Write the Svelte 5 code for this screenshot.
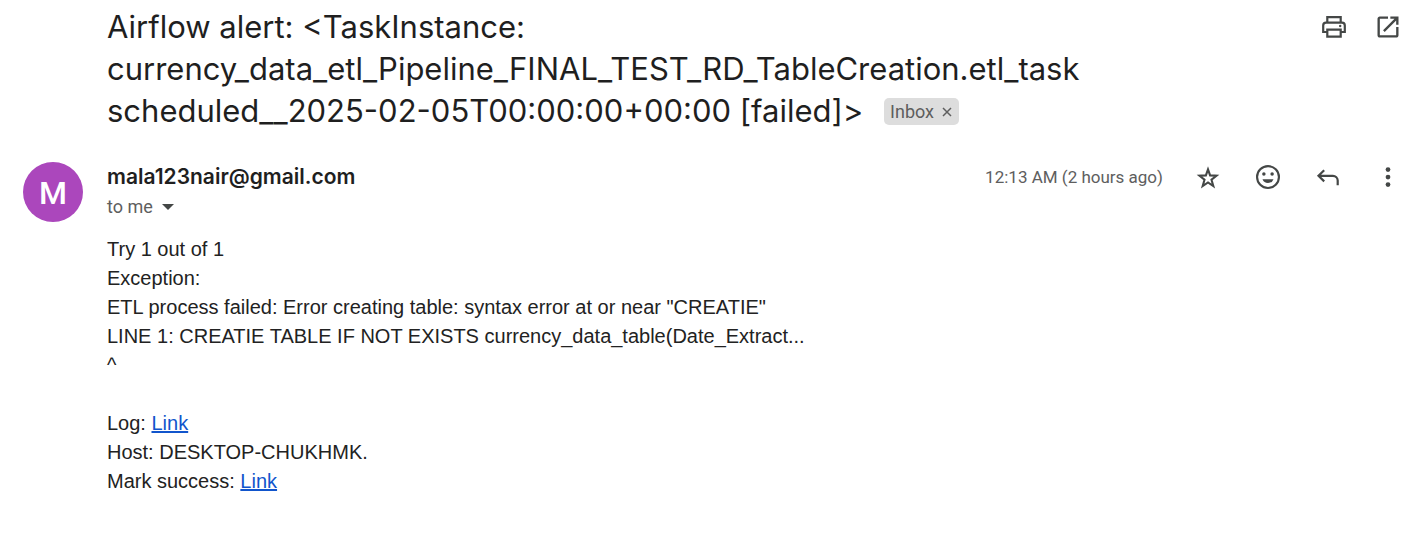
<script>
  const from = 'mala123nair@gmail.com';
</script>

<main>
  <header class="subject">
    <h1>
      Airflow alert: &lt;TaskInstance:<br />
      currency_data_etl_Pipeline_FINAL_TEST_RD_TableCreation.etl_task<br />
      scheduled__2025-02-05T00:00:00+00:00 [failed]&gt;
      <span class="label">Inbox<button aria-label="Remove label Inbox"><svg width="10" height="10" viewBox="0 0 10 10"><path d="M1 1l8 8M9 1l-8 8" stroke="#5e5e5e" stroke-width="1.5" /></svg></button></span>
    </h1>
    <div class="tools">
      <button aria-label="Print all"><svg width="30" height="30" viewBox="0 0 30 30"><path d="M8.3 11V5.2h13.4V11M8.3 20H4.2v-6.5a2.8 2.8 0 0 1 2.8-2.8h16a2.8 2.8 0 0 1 2.8 2.8V20h-4.1M8.3 17.6h13.4v7H8.3z" fill="none" stroke="#444746" stroke-width="2.2" /><circle cx="21.2" cy="14" r="1.2" /></svg></button>
      <button aria-label="Open in new window"><svg width="28" height="28" viewBox="0 0 24 24"><path d="M19 19H5V5h7V3H5c-1.11 0-2 .9-2 2v14c0 1.1.89 2 2 2h14c1.1 0 2-.9 2-2v-7h-2v7zM14 3v2h3.59l-9.83 9.83 1.41 1.41L19 6.41V10h2V3h-7z" /></svg></button>
    </div>
  </header>

  <article>
    <div class="avatar">M</div>
    <div class="message">
      <div class="meta">
        <div class="sender">
          <strong>{from}</strong>
          <button class="to">to me <svg width="12" height="6" viewBox="0 0 12 6"><path d="M0 0h12L6 6z" /></svg></button>
        </div>
        <div class="actions">
          <time>12:13 AM (2 hours ago)</time>
          <button aria-label="Star"><svg width="30" height="30" viewBox="0 0 30 30"><path d="M15 7.4l2.1 6 6.4.3-5 4 1.8 6.3-5.3-3.6L9.700 24l1.800-6.300-5-4 6.400-.3z" fill="none" stroke="#444746" stroke-width="2.1" /></svg></button>
          <button aria-label="Add reaction"><svg width="30" height="30" viewBox="0 0 24 24"><path fill-rule="evenodd" d="M12 2.400a9.600 9.600 0 1 0 0 19.200 9.600 9.600 0 0 0 0-19.200zm0 17.500a7.900 7.900 0 1 1 0-15.800 7.900 7.900 0 0 1 0 15.800z" /><circle cx="8.700" cy="9.600" r="1.400" /><circle cx="15.300" cy="9.600" r="1.400" /><path d="M7.600 13.700a4.700 4.700 0 0 0 8.800 0z" /></svg></button>
          <button aria-label="Reply"><svg width="30" height="30" viewBox="0 0 30 30"><path d="M11.200 8.200L5.500 13.800l5.700 5.600M5.700 13.800h14.200a4.800 4.800 0 0 1 4.800 4.800v4.600" fill="none" stroke="#444746" stroke-width="2.200" /></svg></button>
          <button aria-label="More"><svg width="30" height="30" viewBox="0 0 24 24"><circle cx="12" cy="6" r="1.900" /><circle cx="12" cy="12" r="1.900" /><circle cx="12" cy="18" r="1.900" /></svg></button>
        </div>
      </div>
      <div class="body">
        <p>Try 1 out of 1</p>
        <p>Exception:</p>
        <p>ETL process failed: Error creating table: syntax error at or near "CREATIE"</p>
        <p>LINE 1: CREATIE TABLE IF NOT EXISTS currency_data_table(Date_Extract...</p>
        <p>^</p>
        <p><br /></p>
        <p>Log: <a href="#log">Link</a></p>
        <p>Host: DESKTOP-CHUKHMK.</p>
        <p>Mark success: <a href="#success">Link</a></p>
      </div>
    </div>
  </article>
</main>

<style>
  :global(body) { margin: 0; background: #fff; }
  main { padding: 6px 14px 40px 23px; font-family: Roboto, sans-serif; color: #1f1f1f; }
  button { border: 0; background: none; padding: 0; font: inherit; color: inherit; display: inline-flex; align-items: center; justify-content: center; cursor: pointer; }
  svg { fill: #444746; display: block; }
  .subject { display: flex; justify-content: space-between; padding-left: 84px; }
  h1 { margin: 0; font: 400 31px/42px Inter, sans-serif; }
  .label { display: inline-flex; align-items: center; gap: 8px; height: 27px; padding: 0 7px 0 6px; margin-left: 12px; border-radius: 5px; background: #ddd; color: #5e5e5e; font: 18px/27px Roboto, sans-serif; vertical-align: 4px; }
  .tools { display: flex; gap: 24px; height: 42px; }
  .tools button { width: 30px; }
  article { display: flex; gap: 24px; margin-top: 30px; }
  .avatar { width: 60px; height: 60px; flex: none; border-radius: 50%; background: #ab47bc; color: #fff; font-size: 32px; font-weight: 500; line-height: 62px; text-align: center; }
  .message { flex: 1; min-width: 0; }
  .meta { display: flex; justify-content: space-between; }
  .sender { display: flex; flex-direction: column; align-items: flex-start; }
  strong { font: 600 21px/30px Inter, sans-serif; }
  .to { gap: 9px; font-size: 18px; line-height: 30px; color: #5e5e5e; }
  .actions { display: flex; align-items: center; height: 30px; gap: 30px; }
  .actions button { width: 30px; }
  time { font: 17px/30px Roboto, sans-serif; color: #5e5e5e; }
  .body { margin-top: 13px; font: 20px/29px "Liberation Sans", Arial, sans-serif; color: #222; }
  p { margin: 0; }
  a { color: #15c; }
</style>
